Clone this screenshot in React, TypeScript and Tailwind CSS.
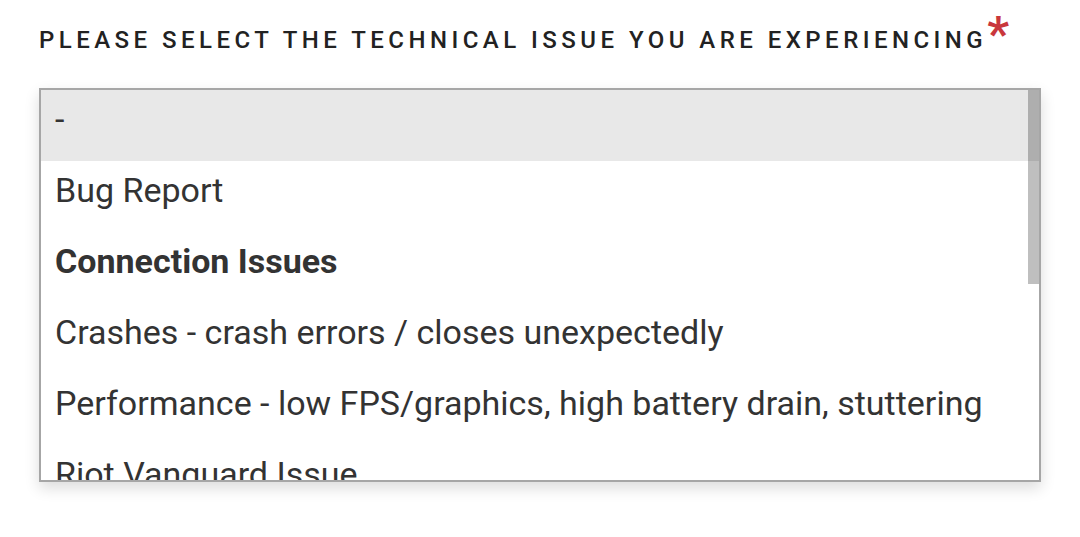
import React from "react";

const options = [
  { label: "-", selected: true },
  { label: "Bug Report" },
  { label: "Connection Issues", bold: true },
  { label: "Crashes - crash errors / closes unexpectedly" },
  { label: "Performance - low FPS/graphics, high battery drain, stuttering" },
  { label: "Riot Vanguard Issue" },
  { label: "Account Issues" },
];

export default function App() {
  return (
    <div className="min-h-[537px] w-full bg-white pl-[39px] pt-[22px] font-['Roboto',sans-serif]">
      <div className="flex items-start">
        <span className="mt-[4px] text-[24px] font-medium leading-[28px] tracking-[0.186em] text-[#222]">
          PLEASE SELECT THE TECHNICAL ISSUE YOU ARE EXPERIENCING
        </span>
        <span className="-mt-[12px] text-[48px] font-bold leading-[48px] text-[#c9373c]">*</span>
      </div>

      <div className="relative mt-[30px] h-[394px] w-[1002px] overflow-hidden border-2 border-[#a6a6a6] bg-white shadow-[0_6px_14px_rgba(0,0,0,0.14)]">
        <div className="flex flex-col">
          {options.map((o) => (
            <div
              key={o.label}
              className={
                "flex h-[71px] shrink-0 items-center pb-[14px] pl-[14px] text-[34px] leading-[40px] text-[#333] " +
                (o.selected ? "bg-[#e8e8e8] " : "") +
                (o.bold ? "font-bold" : "font-normal")
              }
            >
              {o.label}
            </div>
          ))}
        </div>
        <div className="absolute right-0 top-0 h-full w-[11px]">
          <div className="h-[194px] w-full bg-black/25" />
        </div>
      </div>
    </div>
  );
}
